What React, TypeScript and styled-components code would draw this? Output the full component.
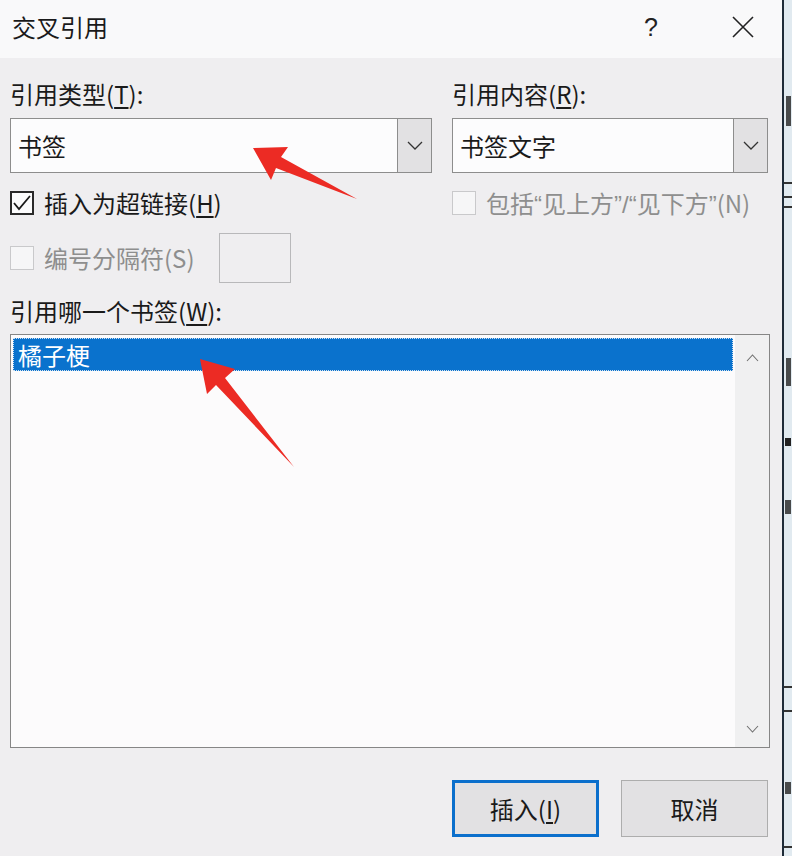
import styled, { createGlobalStyle } from 'styled-components'

const GlobalStyle = createGlobalStyle`
  html, body {
    margin: 0;
    padding: 0;
  }
  body {
    width: 792px;
    height: 856px;
    overflow: hidden;
    background: #efeef0;
    font-family: "Noto Sans CJK SC", "Noto Sans", sans-serif;
    color: #1a1a1a;
  }
`

const Screen = styled.div`
  position: relative;
  display: flex;
  width: 792px;
  height: 856px;
`

const Dialog = styled.div`
  box-sizing: border-box;
  width: 784px;
  height: 856px;
  display: flex;
  flex-direction: column;
  background: #efeef0;
  border-right: 2px solid #1e2b38;
`

const DocEdge = styled.div`
  flex: 1;
  background: #e1eaf0;
  display: flex;
`

const TitleBar = styled.div`
  height: 58px;
  display: flex;
  align-items: center;
  padding: 0 0 4px 12px;
  box-sizing: border-box;
  background: #f9f9fa;
`

const Title = styled.div`
  font-size: 24px;
  line-height: 32px;
  flex: 1;
`

const HelpMark = styled.div`
  font-size: 25px;
  font-family: "Liberation Sans", sans-serif;
  width: 24px;
  text-align: center;
  margin-right: 63px;
  color: #222;
`

const CloseMark = styled.div`
  width: 34px;
  display: flex;
  justify-content: center;
  margin-right: 22px;
`

const Body = styled.div`
  display: flex;
  flex-direction: column;
  padding: 20px 12px 0 10px;
`

const TopGrid = styled.div`
  display: grid;
  grid-template-columns: 422px 316px;
  grid-template-rows: 40px 69px 46px 50px;
  column-gap: 20px;
  align-items: start;
`

const Label = styled.div<{ $disabled?: boolean }>`
  font-size: 24px;
  line-height: 32px;
  height: 32px;
  white-space: nowrap;
  color: ${p => (p.$disabled ? '#8e8e8e' : '#1a1a1a')};
`

const Key = styled.u`
  text-decoration-thickness: 1.5px;
  text-underline-offset: 3px;
`

const Quote = styled.span`
  font-family: "Liberation Sans", sans-serif;
`

const Combo = styled.div`
  box-sizing: border-box;
  height: 55px;
  display: flex;
  border: 1px solid #8d8d8d;
  background: #fcfcfd;
`

const ComboField = styled.div`
  flex: 1;
  padding-left: 7px;
  font-size: 24px;
  line-height: 53px;
`

const ComboButton = styled.div`
  width: 33px;
  border-left: 1px solid #8d8d8d;
  background: #e2e1e3;
  display: flex;
  align-items: center;
  justify-content: center;
`

const CheckRow = styled.div`
  display: flex;
  align-items: center;
  gap: 10px;
  height: 32px;
`

const SepRow = styled.div`
  display: flex;
  align-items: center;
  gap: 10px;
  height: 50px;
`

const CheckBox = styled.div<{ $checked?: boolean }>`
  box-sizing: border-box;
  flex-shrink: 0;
  width: 24px;
  height: 24px;
  display: flex;
  align-items: center;
  justify-content: center;
  background: ${p => (p.$checked ? '#fcfcfd' : '#f6f6f7')};
  border: ${p => (p.$checked ? '2px solid #2a2a2a' : '1px solid #c9c9cb')};
`

const SepInput = styled.div`
  box-sizing: border-box;
  width: 72px;
  height: 50px;
  margin-left: 14px;
  border: 1px solid #b8b8ba;
  background: #efeef0;
`

const ListLabel = styled(Label)`
  margin-top: 12px;
`

const ListBox = styled.div`
  box-sizing: border-box;
  width: 760px;
  height: 414px;
  margin-top: 7px;
  display: flex;
  border: 1px solid #868686;
  background: #fcfbfc;
`

const ListItems = styled.div`
  flex: 1;
  padding: 3px 2px 0 2px;
`

const ListItem = styled.div<{ $selected?: boolean }>`
  box-sizing: border-box;
  height: 33px;
  padding-left: 4px;
  font-size: 24px;
  line-height: 31px;
  color: ${p => (p.$selected ? '#ffffff' : '#1a1a1a')};
  background: ${p => (p.$selected ? '#0a72cd' : 'transparent')};
  border: 1px dotted ${p => (p.$selected ? '#cfe1f2' : 'transparent')};
`

const ScrollBar = styled.div`
  width: 34px;
  background: #f0f0f1;
  display: flex;
  flex-direction: column;
  justify-content: space-between;
  align-items: center;
  padding: 19px 0 14px;
`

const ButtonRow = styled.div`
  display: flex;
  justify-content: flex-end;
  gap: 22px;
  margin-top: 32px;
  margin-right: 2px;
`

const DialogButton = styled.div<{ $primary?: boolean }>`
  box-sizing: border-box;
  width: 147px;
  height: 57px;
  display: flex;
  align-items: center;
  justify-content: center;
  font-size: 24px;
  background: #e2e1e3;
  border: ${p => (p.$primary ? '3px solid #0b6fcc' : '1px solid #adadad')};
`

const Overlay = styled.svg`
  position: absolute;
  left: 0;
  top: 0;
  pointer-events: none;
`

const Chevron = ({ up = false, color = '#333' }: { up?: boolean; color?: string }) => (
  <svg width="16" height="9" viewBox="0 0 16 9">
    <polyline
      points={up ? '1,8 8,1 15,8' : '1,1 8,8 15,1'}
      fill="none"
      stroke={color}
      strokeWidth="1.3"
    />
  </svg>
)

const SmallChevron = ({ up = false }: { up?: boolean }) => (
  <svg width="13" height="8" viewBox="0 0 13 8">
    <polyline
      points={up ? '1,7 6.5,1 12,7' : '1,1 6.5,7 12,1'}
      fill="none"
      stroke="#6f6f6f"
      strokeWidth="1.1"
    />
  </svg>
)

const CheckMark = () => (
  <svg width="20" height="20" viewBox="0 0 20 20">
    <polyline points="2,10 7,16 18,3" fill="none" stroke="#1a1a1a" strokeWidth="1.8" />
  </svg>
)

const EdgeMarks = () => (
  <svg width="8" height="856" viewBox="0 0 8 856">
    <rect x="2" y="96" width="5" height="30" fill="#222" opacity="0.8" />
    <rect x="0" y="182" width="8" height="2" fill="#333" />
    <rect x="0" y="196" width="8" height="2" fill="#333" />
    <rect x="0" y="206" width="8" height="2" fill="#333" />
    <rect x="2" y="358" width="5" height="28" fill="#222" opacity="0.8" />
    <rect x="1" y="438" width="6" height="8" fill="#222" />
    <rect x="1" y="500" width="6" height="14" fill="#222" opacity="0.8" />
    <rect x="0" y="686" width="8" height="2" fill="#333" />
    <rect x="0" y="710" width="8" height="2" fill="#333" />
    <rect x="1" y="782" width="6" height="12" fill="#222" opacity="0.8" />
    <rect x="0" y="846" width="8" height="2" fill="#333" />
  </svg>
)

export default function App() {
  return (
    <Screen>
      <GlobalStyle />
      <Dialog>
        <TitleBar>
          <Title>交叉引用</Title>
          <HelpMark>?</HelpMark>
          <CloseMark>
            <svg width="22" height="22" viewBox="0 0 22 22">
              <path d="M1 1 L21 21 M21 1 L1 21" stroke="#222" strokeWidth="1.6" />
            </svg>
          </CloseMark>
        </TitleBar>

        <Body>
          <TopGrid>
            <Label>
              引用类型(<Key>T</Key>):
            </Label>
            <Label>
              引用内容(<Key>R</Key>):
            </Label>

            <Combo>
              <ComboField>书签</ComboField>
              <ComboButton>
                <Chevron />
              </ComboButton>
            </Combo>
            <Combo>
              <ComboField>书签文字</ComboField>
              <ComboButton>
                <Chevron />
              </ComboButton>
            </Combo>

            <CheckRow>
              <CheckBox $checked>
                <CheckMark />
              </CheckBox>
              <Label>
                插入为超链接(<Key>H</Key>)
              </Label>
            </CheckRow>
            <CheckRow>
              <CheckBox />
              <Label $disabled>
                包括<Quote>“</Quote>见上方<Quote>”/“</Quote>见下方<Quote>”</Quote>(N)
              </Label>
            </CheckRow>

            <SepRow>
              <CheckBox />
              <Label $disabled>编号分隔符(S)</Label>
              <SepInput />
            </SepRow>
          </TopGrid>

          <ListLabel>
            引用哪一个书签(<Key>W</Key>):
          </ListLabel>

          <ListBox>
            <ListItems>
              <ListItem $selected>橘子梗</ListItem>
            </ListItems>
            <ScrollBar>
              <SmallChevron up />
              <SmallChevron />
            </ScrollBar>
          </ListBox>

          <ButtonRow>
            <DialogButton $primary>
              插入(<Key>I</Key>)
            </DialogButton>
            <DialogButton>取消</DialogButton>
          </ButtonRow>
        </Body>
      </Dialog>

      <DocEdge>
        <EdgeMarks />
      </DocEdge>

      <Overlay width="792" height="856" viewBox="0 0 792 856">
        <polygon
          points="253,148 288,147 281,157 357,199 276,168 271,180"
          fill="#ec2b24"
        />
        <polygon
          points="200,359 235,369 225,378 294,467 216,385 207,394"
          fill="#ec2b24"
        />
      </Overlay>
    </Screen>
  )
}
